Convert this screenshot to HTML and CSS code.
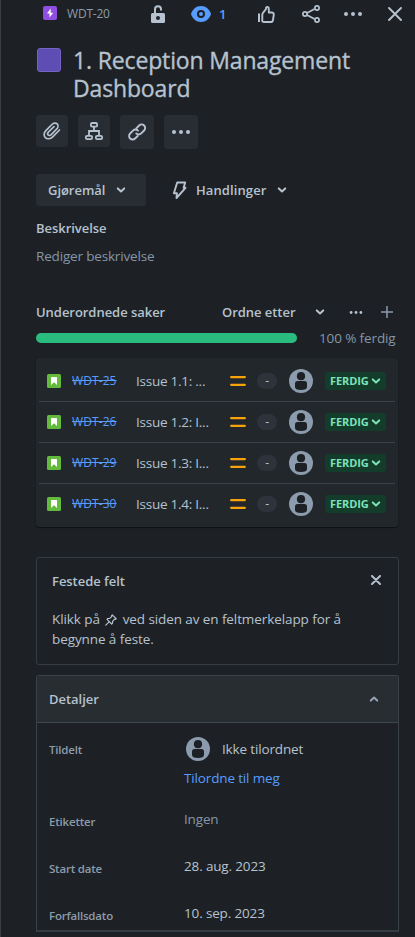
FILE: index.html
```html
<!DOCTYPE html>
<html lang="nb">
<head>
<meta charset="utf-8">
<title>WDT-20</title>
<link rel="stylesheet" href="styles.css">
</head>
<body>
<svg class="defs" width="0" height="0">
  <symbol id="chevron" viewBox="0 0 10 8"><path d="M1.800 2.400 5 5.400 8.200 2.400" fill="none" stroke="currentColor" stroke-width="2" stroke-linecap="round" stroke-linejoin="round"/></symbol>
  <symbol id="dots" viewBox="0 0 20 6"><circle cx="3" cy="3" r="2"/><circle cx="10" cy="3" r="2"/><circle cx="17" cy="3" r="2"/></symbol>
  <symbol id="avatar" viewBox="0 0 24 24"><circle cx="12" cy="12" r="12" fill="#8c9bad"/><circle cx="12" cy="7.200" r="4.100" fill="#1d2125"/><path d="M8.500 12h7q2.500 0 2.500 2.500V18q0 3-6 3t-6-3v-3.500q0-2.500 2.500-2.500z" fill="#1d2125"/></symbol>
  <symbol id="story" viewBox="0 0 14 14"><rect width="14" height="14" rx="1.500" fill="#63ba3c"/><path d="M4 3.500Q4 3 4.500 3h5q.5 0 .5.500V11L7 8.300 4 11z" fill="#fff"/></symbol>
  <symbol id="medium" viewBox="0 0 16 12"><path d="M1.200 2.200h13.600M1.200 9.800h13.600" stroke="#f9a30a" stroke-width="2.300" stroke-linecap="round"/></symbol>
</svg>
<main class="panel">
  <header class="top">
    <svg class="type" viewBox="0 0 14 14"><rect width="14" height="14" rx="2" fill="#904ee2"/><path d="M7.700 2.500 4 7.400h2.500v4.200L10.200 6.700H7.700z" fill="#fff"/></svg>
    <span class="crumb">WDT-20</span>
    <svg class="lock" viewBox="0 0 14 19"><path d="M4 9V4.200a3 3 0 0 1 6 0v1.300" fill="none" stroke="currentColor" stroke-width="2"/><path fill-rule="evenodd" d="M1.500 8h11Q14 8 14 9.500v7q0 1.500-1.500 1.500h-11Q0 18 0 16.500v-7Q0 8 1.500 8zM7 11a2 2 0 1 0 0 4 2 2 0 0 0 0-4z"/></svg>
    <svg class="eye" viewBox="0 0 20 16"><path d="M10 0c5 0 8.500 3.500 10 8-1.500 4.500-5 8-10 8S1.500 12.500 0 8C1.500 3.500 5 0 10 0z"/><circle cx="10" cy="8" r="3" fill="none" stroke="#1d2125" stroke-width="2"/></svg>
    <span class="watch">1</span>
    <svg class="thumb" viewBox="0 0 17 17"><path d="M1 7.500V16" fill="none" stroke="currentColor" stroke-width="2"/><path d="M4.300 15V8.500q0-.6.500-1.300L8 3V2q0-1 1.200-1 1.600 0 1.600 2v3.500h3q2 0 2 2l-.8 5.500q-.3 2-2.200 2H6q-1.700 0-1.700-1z" fill="none" stroke="currentColor" stroke-width="1.900" stroke-linejoin="round"/></svg>
    <svg class="share" viewBox="0 0 18 18"><path d="M5 8 12.500 4M5 10l7.500 4" stroke="currentColor" stroke-width="1.800"/><g fill="none" stroke="currentColor" stroke-width="1.700"><circle cx="3" cy="9" r="2.100"/><circle cx="15" cy="3" r="2.100"/><circle cx="15" cy="15" r="2.100"/></g></svg>
    <svg class="more"><use href="#dots"/></svg>
    <svg class="close" viewBox="0 0 14 14"><path d="m1 1 12 12M13 1 1 13" stroke="currentColor" stroke-width="1.900" stroke-linecap="round"/></svg>
  </header>

  <div class="heading">
    <span class="swatch"></span>
    <h1>1. Reception Management<br>Dashboard</h1>
  </div>

  <div class="tools">
    <button class="tool" aria-label="Legg ved"><svg width="20" height="20" viewBox="0 0 20 20"><g fill="none" stroke="currentColor" stroke-width="1.700" stroke-linecap="round"><path d="m17.500 9-6.800 6.800c-2.300 2.300-5.600 2.600-7.400.8s-1.500-5 .8-7.300l5.800-5.800c1.700-1.700 4-1.900 5.300-.6s1.100 3.600-.6 5.300L9.200 13.600c-1 1-2.400 1.200-3.100.4s-.6-2 .4-3L12 5.700"/></g></svg></button>
    <button class="tool" aria-label="Legg til underordnet"><svg width="20" height="20" viewBox="0 0 20 20"><g fill="none" stroke="currentColor" stroke-width="1.800"><rect x="6.900" y="2" width="6.200" height="3.600" rx="1.200"/><rect x="1.900" y="14.900" width="6.200" height="3.200" rx="1.200"/><rect x="11.900" y="14.900" width="6.200" height="3.200" rx="1.200"/><path d="M10 5.600V10M5 14.500V10h10v4.500"/></g></svg></button>
    <button class="tool wide" aria-label="Koble til"><svg width="20" height="20" viewBox="0 0 20 20"><g fill="none" stroke="currentColor" stroke-width="1.900" stroke-linecap="round"><path d="m9.300 6.300 2.800-2.800a3.500 3.500 0 0 1 5 5l-2.900 2.900a3.500 3.500 0 0 1-5 0"/><path d="m10.700 14-2.600 2.500a3.500 3.500 0 0 1-5-5L6 8.600a3.500 3.500 0 0 1 5 0"/></g></svg></button>
    <button class="tool wide" aria-label="Mer"><svg class="toolmore"><use href="#dots"/></svg></button>
  </div>

  <div class="actions">
    <button class="status"><span>Gjøremål</span><svg class="chev"><use href="#chevron"/></svg></button>
    <button class="automation"><svg class="bolt" viewBox="0 0 15 19"><path d="M5.200 1.500h8L11.600 6.800h1.900L4.500 17l.4-4.800H1.900z" fill="none" stroke="currentColor" stroke-width="1.900" stroke-linejoin="round"/></svg><span>Handlinger</span><svg class="chev"><use href="#chevron"/></svg></button>
  </div>

  <h2 class="desc-title">Beskrivelse</h2>
  <p class="desc">Rediger beskrivelse</p>

  <div class="children-head">
    <h2>Underordnede saker</h2>
    <span class="order">Ordne etter</span>
    <svg class="chev"><use href="#chevron"/></svg>
    <svg class="small-more" viewBox="0 0 20 6"><use href="#dots" width="20" height="6"/></svg>
    <svg class="plus" viewBox="0 0 12 12"><path d="M6 0v12M0 6h12" stroke="currentColor" stroke-width="1.500"/></svg>
  </div>
  <div class="progress"><span class="bar"></span><span class="percent">100 % ferdig</span></div>

  <div class="issues">
    <div class="issue"><svg class="story"><use href="#story"/></svg><a class="key">WDT-25</a><span class="sum">Issue 1.1: ...</span><svg class="prio"><use href="#medium"/></svg><span class="pill">-</span><svg class="avatar"><use href="#avatar"/></svg><span class="done"><b>FERDIG</b><svg class="chev"><use href="#chevron"/></svg></span></div>
    <div class="issue"><svg class="story"><use href="#story"/></svg><a class="key">WDT-26</a><span class="sum">Issue 1.2: I...</span><svg class="prio"><use href="#medium"/></svg><span class="pill">-</span><svg class="avatar"><use href="#avatar"/></svg><span class="done"><b>FERDIG</b><svg class="chev"><use href="#chevron"/></svg></span></div>
    <div class="issue"><svg class="story"><use href="#story"/></svg><a class="key">WDT-29</a><span class="sum">Issue 1.3: I...</span><svg class="prio"><use href="#medium"/></svg><span class="pill">-</span><svg class="avatar"><use href="#avatar"/></svg><span class="done"><b>FERDIG</b><svg class="chev"><use href="#chevron"/></svg></span></div>
    <div class="issue"><svg class="story"><use href="#story"/></svg><a class="key">WDT-30</a><span class="sum">Issue 1.4: I...</span><svg class="prio"><use href="#medium"/></svg><span class="pill">-</span><svg class="avatar"><use href="#avatar"/></svg><span class="done"><b>FERDIG</b><svg class="chev"><use href="#chevron"/></svg></span></div>
  </div>

  <section class="pinned">
    <div class="pinned-head"><h2>Festede felt</h2><svg class="dismiss" viewBox="0 0 10 10"><path d="m1 1 8 8M9 1 1 9" stroke="currentColor" stroke-width="2" stroke-linecap="round"/></svg></div>
    <p>Klikk på <svg class="pin" viewBox="0 0 12 12"><path d="M7.300.8 11.200 4.700 10.300 5.400 9.500 5.200 7.600 7.300 7.500 9.200 6.700 10 2 5.300 2.800 4.500 4.700 4.400 6.800 2.500 6.600 1.600zM4.300 7.700.8 11.200" fill="none" stroke="currentColor" stroke-width="1.200" stroke-linejoin="round" stroke-linecap="round"/></svg> ved siden av en feltmerkelapp for å<br>begynne å feste.</p>
  </section>

  <section class="details">
    <div class="details-head"><h2>Detaljer</h2><svg class="chev up"><use href="#chevron"/></svg></div>
    <dl>
      <div class="field assignee"><dt>Tildelt</dt><dd><div class="who"><svg class="avatar"><use href="#avatar"/></svg><span>Ikke tilordnet</span></div><a class="assign">Tilordne til meg</a></dd></div>
      <div class="field"><dt>Etiketter</dt><dd class="muted">Ingen</dd></div>
      <div class="field"><dt>Start date</dt><dd>28. aug. 2023</dd></div>
      <div class="field"><dt>Forfallsdato</dt><dd>10. sep. 2023</dd></div>
    </dl>
  </section>
</main>
</body>
</html>
```
FILE: styles.css
```css
* { box-sizing: border-box; margin: 0; padding: 0; }
body { background: #1d2125; font-family: "Open Sans", sans-serif; font-size: 13.5px; line-height: 20px; letter-spacing: -0.12px; color: #b6c2cf; }
svg { display: block; flex: none; fill: currentColor; }
.defs { position: absolute; }
button { display: flex; align-items: center; border: 0; background: none; color: inherit; font: inherit; letter-spacing: inherit; }
h2, .status, .automation, .order { font-size: 13px; font-weight: 600; line-height: 20px; letter-spacing: -0.04px; white-space: nowrap; }
.panel { height: 937px; overflow: hidden; padding: 0 16px 0 35px; border-left: 1px solid #3a3d41; }
.chev { width: 10px; height: 8px; }

.top { display: flex; align-items: center; height: 28px; padding-left: 7px; margin-right: -4px; }
.type { width: 14px; height: 14px; margin-top: -2px; }
.crumb { width: 94px; padding-left: 10px; color: #8c9bab; font-size: 12px; letter-spacing: -0.2px; }
.lock { width: 14px; height: 19px; }
.eye { width: 20px; height: 16px; margin-left: 26px; color: #579dff; }
.watch { width: 47px; padding-left: 8px; color: #579dff; font-weight: 600; font-size: 13px; }
.thumb { width: 17px; height: 17px; }
.share { width: 18px; height: 18px; margin-left: 27px; }
.more { width: 20px; height: 6px; margin-left: 23px; }
.close { width: 14px; height: 14px; margin-left: 25px; }

.heading { display: flex; height: 87px; padding: 19px 0 0 1px; }
.swatch { width: 24px; height: 24px; margin: 1px 12px 0 0; background: #5e4db2; border: 1px solid #7462c4; border-radius: 3px; }
h1 { margin-top: -1px; font-size: 23px; line-height: 28px; font-weight: 500; white-space: nowrap; letter-spacing: -0.15px; -webkit-text-stroke: 0.35px #b6c2cf; }

.tools { display: flex; gap: 10px; height: 59px; }
.tool { width: 32px; height: 32px; justify-content: center; background: #282d33; border-radius: 3px; }
.tool.wide { width: 34px; height: 34px; }
.toolmore { width: 20px; height: 6px; }

.actions { display: flex; gap: 26px; height: 44px; }
.status { width: 110px; height: 32px; padding-left: 12px; gap: 11px; background: #282d33; border-radius: 3px; }
.automation { height: 32px; letter-spacing: 0.1px; }
.bolt { width: 15px; height: 19px; margin-right: 9px; }
.automation .chev { margin-left: 11px; }
.desc-title { margin-bottom: 8px; }
.desc { height: 56px; color: #8696a7; letter-spacing: -0.17px; }

.children-head { display: flex; align-items: center; height: 20px; }
.children-head h2 { width: 186px; }
.order { width: 93px; }
.small-more { width: 14px; height: 5px; margin-left: 24px; }
.plus { width: 12px; height: 12px; margin-left: 18px; color: #8c9bab; }
.progress { display: flex; align-items: center; height: 36px; padding-bottom: 4px; }
.bar { width: 261px; height: 10px; border-radius: 5px; background: #2abb7f; }
.percent { margin-left: 22px; color: #8696a7; white-space: nowrap; }

.issues { width: 362px; height: 169px; padding: 2px 3px; background: #22272b; border-radius: 3px; box-shadow: 0 1px 1px #101214, 0 0 1px #101214; }
.issue { display: flex; align-items: center; height: 41px; padding: 0 0 1px 8px; border-bottom: 1px solid #3a4147; }
.issue:first-child { height: 42px; padding-bottom: 0; }
.issue:last-child { border-bottom: 0; padding-bottom: 2px; }
.story { width: 14px; height: 14px; }
.key { width: 64px; margin-left: 11px; color: #579dff; text-decoration: line-through; font-size: 12px; letter-spacing: 0.1px; }
.sum { width: 94px; white-space: nowrap; letter-spacing: -0.25px; }
.prio { width: 16px; height: 12px; }
.pill { width: 20px; height: 16px; margin: 0 12px 0 11px; border-radius: 8px; background: #2c333a; text-align: center; font-size: 12px; line-height: 16px; }
.avatar { width: 24px; height: 24px; }
.done { display: flex; align-items: center; width: 61px; height: 18px; margin-left: 12px; padding-left: 5px; gap: 2px; border-radius: 3px; background: #143c2a; color: #7ee2b8; font-size: 11px; letter-spacing: -0.1px; }

.pinned { width: 363px; height: 108px; margin-top: 30px; padding: 13px 15px; border: 1px solid #353c43; border-radius: 3px; }
.pinned-head { display: flex; justify-content: space-between; height: 38px; padding-right: 2px; }
.dismiss { width: 10px; height: 10px; margin-top: 4px; }
.pinned p { white-space: nowrap; letter-spacing: -0.09px; }
.pin { display: inline-block; width: 12px; height: 12px; margin: 0 2px; vertical-align: -2px; }

.details { width: 363px; height: 257px; margin-top: 10px; border: 1px solid #3a4249; border-bottom: 2px solid #343d46; border-radius: 3px 3px 0 0; }
.details-head { display: flex; align-items: center; justify-content: space-between; height: 47px; padding: 0 19px 0 12px; background: #282d31; border-bottom: 1px solid #3f474e; }
.up { transform: rotate(180deg); color: #96a4b3; }
.field { display: flex; height: 47px; padding-left: 12px; }
.field dt { width: 135px; padding-top: 3px; color: #8c9bab; font-size: 11.5px; font-weight: 600; letter-spacing: -0.2px; }
.field dd { white-space: nowrap; letter-spacing: -0.15px; }
dl { padding-top: 14px; }
.field.assignee { height: 72px; }
.who { display: flex; align-items: center; gap: 12px; padding-left: 2px; height: 24px; }
.assign { display: block; margin-top: 7px; color: #579dff; }
.muted { color: #8696a7; }
```
